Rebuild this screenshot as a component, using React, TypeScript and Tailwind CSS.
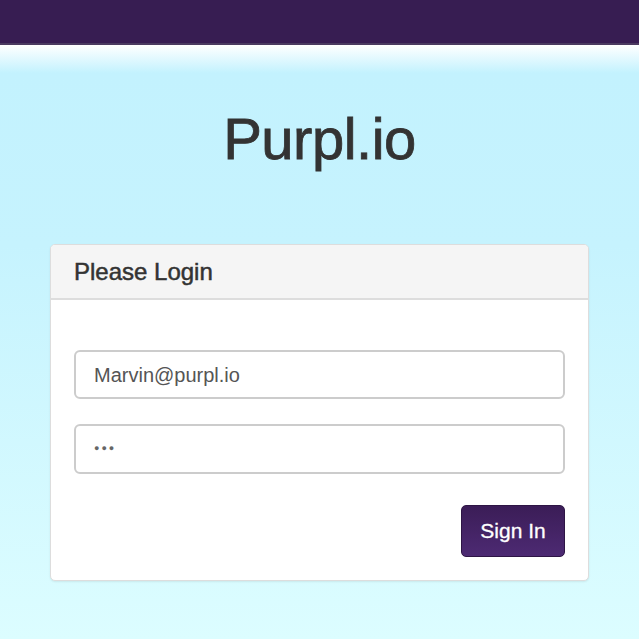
import React from "react";

export default function App() {
  return (
    <div
      className="w-[639px] h-[639px] overflow-hidden flex flex-col"
      style={{ fontFamily: '"Liberation Sans", Arial, sans-serif' }}
    >
      <div className="h-[45px] bg-[#371d52] border-b-2 border-[#4a3a60] shrink-0" />
      <div className="flex-1 bg-[linear-gradient(to_bottom,#ffffff_0px,#c3f2fe_28px,#c6f3fe_200px,#dcfdff_100%)] flex flex-col items-center">
        <h1 className="mt-[65px] text-[58px] leading-none tracking-[-0.5px] text-[#333333] [-webkit-text-stroke:0.8px_#333333]">Purpl.io</h1>
        <div className="mt-[76px] w-[539px] bg-white border border-[#dddddd] rounded-[5px] shadow-[0_1px_2px_rgba(0,0,0,0.08)] overflow-hidden">
          <div className="h-[55px] bg-[#f5f5f5] border-b-2 border-[#dddddd] flex items-center px-[23px]">
            <span className="text-[24px] text-[#333333] [-webkit-text-stroke:0.5px_#333333]">Please Login</span>
          </div>
          <div className="px-[23px] pt-[50px] pb-[23px] flex flex-col">
            <div className="h-[49px] border-2 border-[#cccccc] rounded-[6px] flex items-center px-[18px] text-[20px] text-[#555555]">
              Marvin@purpl.io
            </div>
            <div className="mt-[25px] h-[50px] border-2 border-[#cccccc] rounded-[6px] flex items-center px-[18px] text-[#666666]">
              <span className="tracking-[2px] text-[9px]">●●●</span>
            </div>
            <div className="mt-[31px] flex justify-end">
              <div className="w-[104px] h-[52px] rounded-[5px] bg-[linear-gradient(to_bottom,#3b1d57,#4d2a73)] border border-[#2e1545] flex items-center justify-center text-white text-[21px] [-webkit-text-stroke:0.3px_#ffffff]">
                Sign In
              </div>
            </div>
          </div>
        </div>
      </div>
    </div>
  );
}
